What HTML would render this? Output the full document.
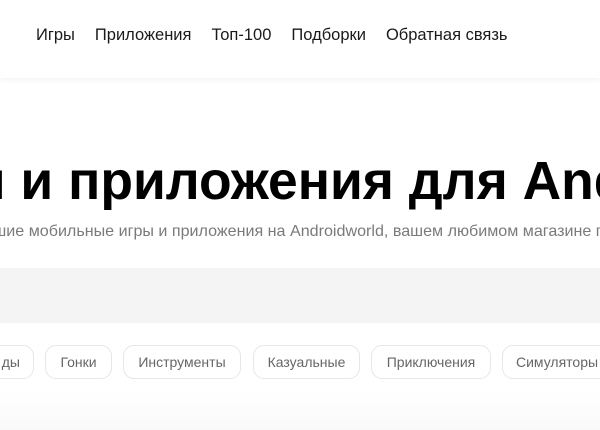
<!DOCTYPE html>
<html><head><meta charset="utf-8"><style>
*{margin:0;padding:0;box-sizing:border-box}
body{width:600px;height:430px;overflow:hidden;background:#fff;font-family:"Liberation Sans",sans-serif;position:relative}
.hdr{position:absolute;left:0;top:0;width:600px;height:78px;background:#fff;box-shadow:0 2px 6px rgba(0,0,0,.05)}
.nav{position:absolute;top:26px;left:36px;font-size:16.5px;color:#1a1a1a;white-space:nowrap}
.nav span{margin-right:20px}
.line{position:absolute;white-space:nowrap}
.title{top:151px;left:-40px;font-size:53.4px;font-weight:bold;color:#000}
.sub{top:222px;left:-15px;font-size:16.1px;color:#7a7a7a}
.band{position:absolute;left:0;top:268px;width:600px;height:55px;background:#f4f4f4}
.bot{position:absolute;left:0;top:392px;width:600px;height:38px;background:linear-gradient(#fff,#f9f9f9)}
.chip{position:absolute;top:345px;height:34px;border:1px solid #e6e6e6;border-radius:11px;font-size:14px;color:#666;line-height:32px;text-align:center;background:#fff;white-space:nowrap;overflow:hidden}
</style></head><body>
<div class="hdr"><div class="nav"><span>Игры</span><span>Приложения</span><span>Топ-100</span><span>Подборки</span><span>Обратная связь</span></div></div>
<div class="line title">ы и приложения для Android</div>
<div class="line sub">чшие мобильные игры и приложения на Androidworld, вашем любимом магазине приложений</div>
<div class="band"></div>
<div class="bot"></div>
<div class="chip" style="left:-40px;width:74px;text-align:right;padding-right:13px">ды</div>
<div class="chip" style="left:45px;width:67px">Гонки</div>
<div class="chip" style="left:123px;width:118px">Инструменты</div>
<div class="chip" style="left:253px;width:107px">Казуальные</div>
<div class="chip" style="left:371px;width:120px">Приключения</div>
<div class="chip" style="left:502px;width:120px;text-align:left;padding-left:13px">Симуляторы</div>
</body></html>
